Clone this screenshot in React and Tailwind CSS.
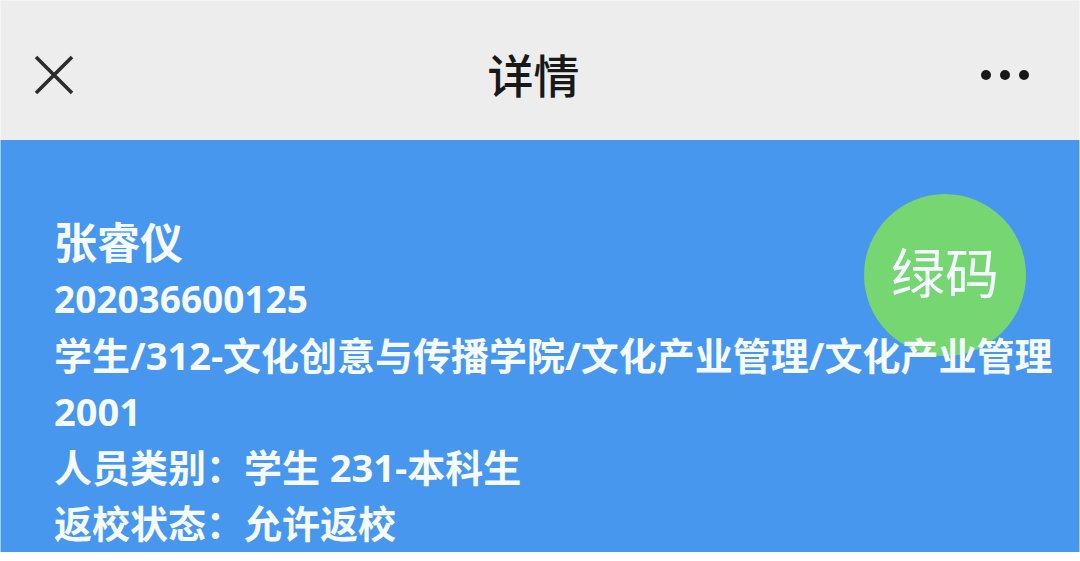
export default function App() {
  return (
    <div className="min-h-screen bg-white font-['Open_Sans','Noto_Sans_CJK_SC',sans-serif]">
      <header className="grid h-[140px] grid-cols-[1fr_auto_1fr] items-center border-x border-t border-[#f5f5f5] bg-[#ededed] pt-2 pr-[46px] pl-[33px] text-[#181818]">
        <button type="button" aria-label="关闭" className="justify-self-start">
          <svg className="size-10" viewBox="0 0 40 40" fill="none" stroke="#2c2c2c" strokeWidth="3.6">
            <path d="M2 2 38 38M38 2 2 38" />
          </svg>
        </button>
        <h1 className="text-[46px] leading-[64px] font-medium">详情</h1>
        <button type="button" aria-label="更多" className="justify-self-end">
          <svg className="h-3 w-[54px]" viewBox="0 0 54 12" fill="currentColor">
            <circle cx="7" cy="6" r="5" />
            <circle cx="26" cy="6" r="5" />
            <circle cx="45" cy="6" r="5" />
          </svg>
        </button>
      </header>
      <main className="relative border-x border-[#a3cbf6] bg-[#4797ee] pt-[75px] pr-4 pb-px pl-[53px] text-[#f5fbff]">
        <div className="absolute top-[54px] right-[53px] flex size-[162px] items-center justify-center rounded-full bg-[#76d672] pb-1 text-[54px]">绿码</div>
        <div className="relative font-bold">
          <h2 className="text-[43px] leading-[56px]">张睿仪</h2>
          <p className="text-[37px] leading-[56px]">202036600125</p>
          <p className="text-[38px] leading-[56px]">学生/312-文化创意与传播学院/文化产业管理/文化产业管理2001</p>
          <p className="text-[38px] leading-[56px]">人员类别：学生 231-本科生</p>
          <p className="text-[38px] leading-[56px]">返校状态：允许返校</p>
        </div>
      </main>
    </div>
  );
}
